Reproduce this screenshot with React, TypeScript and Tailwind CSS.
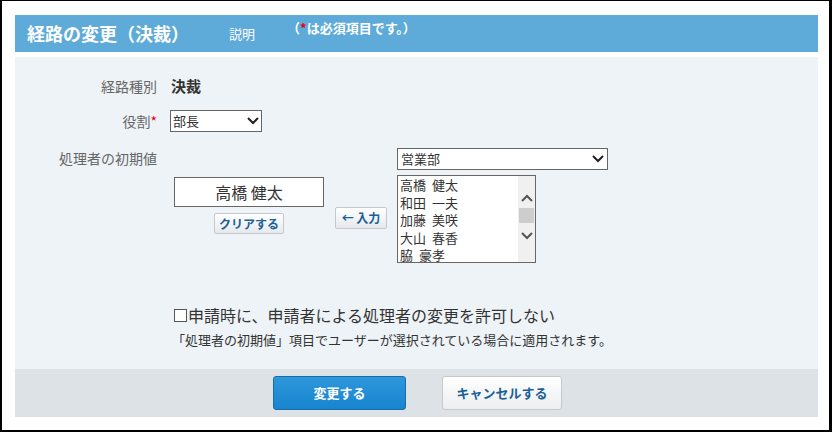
import React from "react";

const Chev = () => (
  <svg width="12" height="8" viewBox="0 0 12 8"><path d="M1 1l5 5 5-5" fill="none" stroke="#222" strokeWidth="2" /></svg>
);

export default function App() {
  const f = { fontFamily: '"Noto Sans CJK JP", "Noto Sans", sans-serif' };
  return (
    <div style={f} className="w-[832px] h-[432px] bg-white border-l-2 border-t border-r-[3px] border-b-2 border-black pt-[14px] pl-[13px] text-[#333]">
      <div className="w-[803px]">
        <div className="h-[37px] bg-[#5eaad9] flex items-center text-white">
          <div className="ml-[12px] text-[18px] font-bold">経路の変更（決裁）</div>
          <div className="ml-[40px] text-[13px]">説明</div>
          <div className="ml-[32px] text-[13px] font-bold -mt-[12px]">（<span className="text-[#e60012]">*</span>は必須項目です。）</div>
        </div>
        <div className="mt-[5px] h-[312px] bg-[#eef3f7] relative">
          <div className="flex items-center pt-[18px] h-[40px]">
            <div className="w-[142px] text-right text-[14px] text-[#666]">経路種別</div>
            <div className="ml-[14px] text-[15px] font-bold">決裁</div>
          </div>
          <div className="flex items-center mt-[13px]">
            <div className="w-[142px] text-right text-[14px] text-[#666]">役割<span className="text-[#e60012]">*</span></div>
            <div className="ml-[13px] w-[92px] h-[22px] bg-white border border-[#666] flex items-center justify-between px-[2px] text-[13px] text-[#333]">部長<Chev /></div>
          </div>
          <div className="flex mt-[22px]">
            <div className="w-[142px] text-right text-[14px] text-[#666] leading-[20px] -mt-[6px]">処理者の初期値</div>
            <div className="ml-[17px] w-[150px] mt-[23px] flex flex-col items-center">
              <div className="w-[150px] h-[30px] bg-white border border-[#666] flex items-center justify-center text-[16px]">高橋 健太</div>
              <div className="mt-[6px] h-[21px] px-[4px] border border-[#c6c9cc] rounded-[2px] bg-gradient-to-b from-white to-[#e6e9ec] text-[12px] font-bold text-[#1a5f97] flex items-center">クリアする</div>
            </div>
            <div className="ml-[11px] mt-[53px] h-[22px] w-[52px] border border-[#c6c9cc] rounded-[2px] bg-gradient-to-b from-white to-[#e6e9ec] text-[12px] font-bold text-[#1a5f97] flex items-center justify-center">← 入力</div>
            <div className="ml-[10px] -mt-[6px]">
              <div className="w-[211px] h-[22px] bg-white border border-[#666] flex items-center justify-between px-[3px] text-[13px]">営業部<Chev /></div>
              <div className="mt-[5px] w-[139px] h-[88px] bg-white border border-[#666] flex overflow-hidden">
                <div className="flex-1 pl-[2px] text-[13px] leading-[17.5px] [word-spacing:3px]">
                  <div>高橋 健太</div><div>和田 一夫</div><div>加藤 美咲</div><div>大山 春香</div><div>脇 豪孝</div>
                </div>
                <div className="w-[17px] bg-[#f0f0f0] flex flex-col items-center pt-[18px]">
                  <svg width="12" height="8" viewBox="0 0 12 8"><path d="M1 7l5-5 5 5" fill="none" stroke="#555" strokeWidth="2" /></svg>
                  <div className="mt-[6px] w-[15px] h-[15px] bg-[#cdcdcd]" />
                  <svg className="mt-[9px]" width="12" height="8" viewBox="0 0 12 8"><path d="M1 1l5 5 5-5" fill="none" stroke="#555" strokeWidth="2" /></svg>
                </div>
              </div>
            </div>
          </div>
          <div className="ml-[159px] mt-[40px] text-[16px] text-[#333] flex items-center">
            <span className="inline-block w-[13px] h-[13px] border border-[#555] bg-white mr-[1px]" />申請時に、申請者による処理者の変更を許可しない
          </div>
          <div className="ml-[157px] mt-[3px] text-[13px] text-[#333]">「処理者の初期値」項目でユーザーが選択されている場合に適用されます。</div>
        </div>
        <div className="h-[48px] bg-[#dde2e6] flex items-center justify-center gap-[36px] pl-[2px]">
          <div className="w-[133px] h-[34px] rounded-[3px] border border-[#1a6ca8] bg-gradient-to-b from-[#2e97dc] to-[#1785cf] text-white text-[13px] font-bold flex items-center justify-center">変更する</div>
          <div className="w-[120px] h-[34px] rounded-[3px] border border-[#c6c9cc] bg-gradient-to-b from-white to-[#eceef0] text-[#1a5f97] text-[13px] font-bold flex items-center justify-center">キャンセルする</div>
        </div>
      </div>
    </div>
  );
}
